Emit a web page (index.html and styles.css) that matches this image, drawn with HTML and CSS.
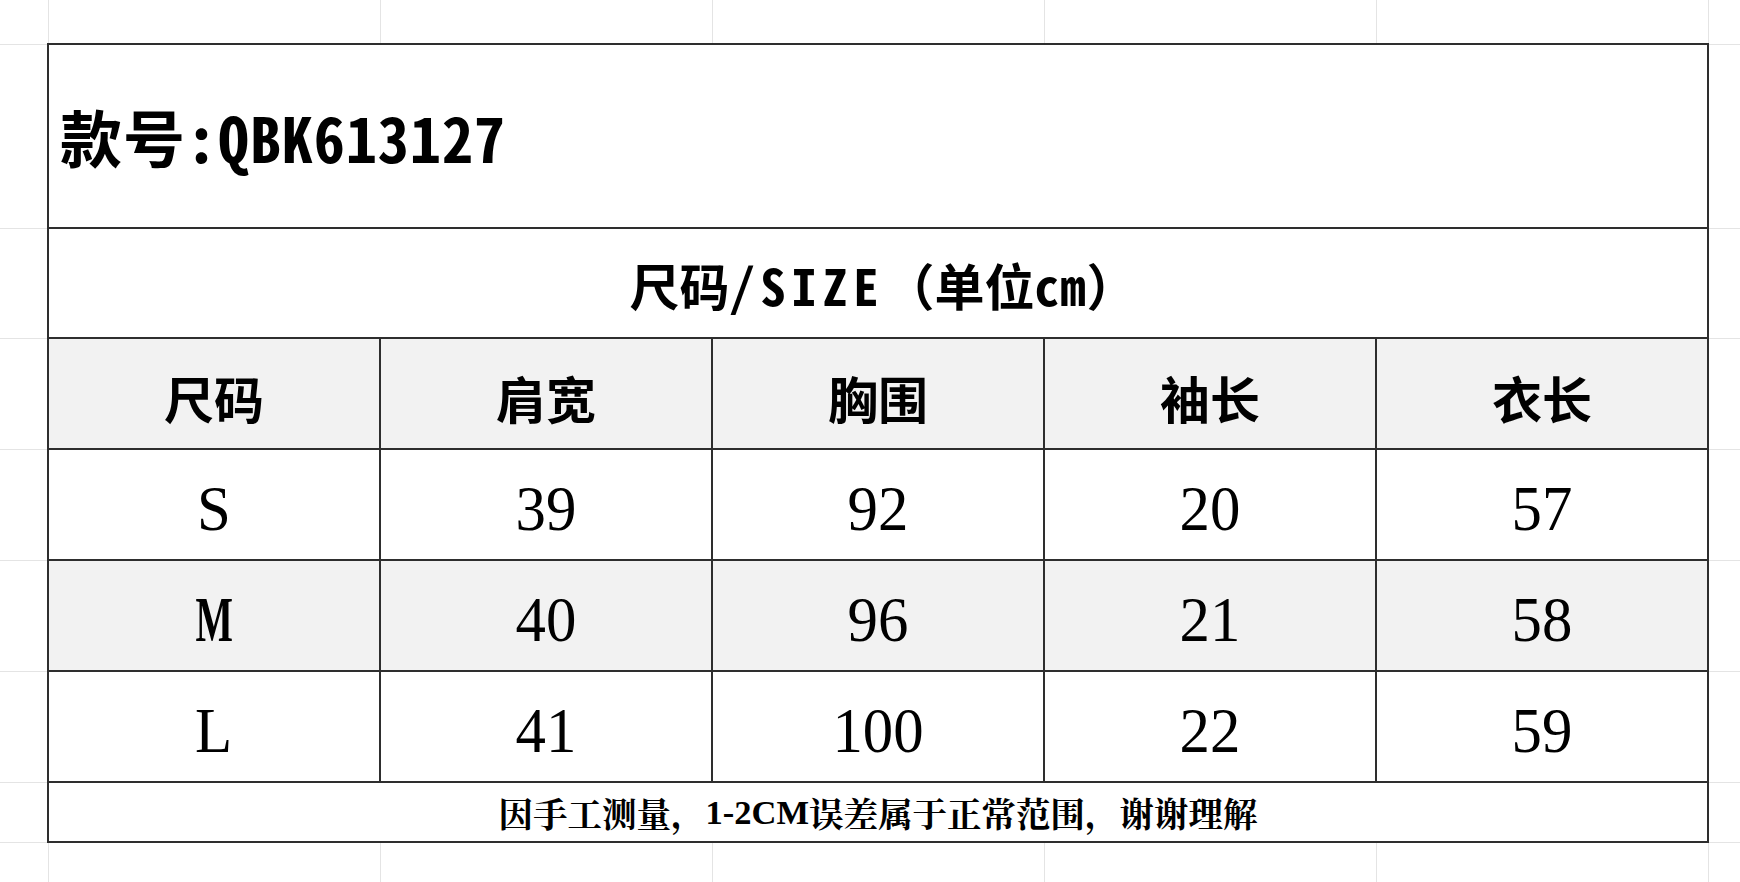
FILE: index.html
```html
<!DOCTYPE html>
<html lang="zh-CN">
<head>
<meta charset="utf-8">
<title>尺码表 QBK613127</title>
<link rel="stylesheet" href="styles.css">
</head>
<body>
<div class="sheet">
  <div class="table">
    <div class="cell title">款号<span class="hw">:QBK613127</span></div>
    <div class="cell caption">尺码<span class="hw size">/SIZE</span>（单位<span class="hw cm">cm</span>）</div>

    <div class="cell head">尺码</div>
    <div class="cell head">肩宽</div>
    <div class="cell head">胸围</div>
    <div class="cell head">袖长</div>
    <div class="cell head">衣长</div>

    <div class="cell num"><span>S</span></div>
    <div class="cell num"><span>39</span></div>
    <div class="cell num"><span>92</span></div>
    <div class="cell num"><span>20</span></div>
    <div class="cell num"><span>57</span></div>

    <div class="cell num shade"><span class="narrow">M</span></div>
    <div class="cell num shade"><span>40</span></div>
    <div class="cell num shade"><span>96</span></div>
    <div class="cell num shade"><span>21</span></div>
    <div class="cell num shade"><span>58</span></div>

    <div class="cell num"><span>L</span></div>
    <div class="cell num"><span>41</span></div>
    <div class="cell num"><span>100</span></div>
    <div class="cell num"><span>22</span></div>
    <div class="cell num"><span>59</span></div>

    <div class="cell note">因手工测量，<span class="latin">1-2CM</span>误差属于正常范围，谢谢理解</div>
  </div>
</div>
</body>
</html>
```

FILE: styles.css
```css
html, body {
  margin: 0;
  padding: 0;
}

body {
  width: 1740px;
  height: 882px;
  overflow: hidden;
  background-color: #ffffff;
  background-image:
    linear-gradient(to right, #e4e4e4 1px, transparent 1px),
    linear-gradient(#e4e4e4, #e4e4e4),
    linear-gradient(#e4e4e4, #e4e4e4),
    linear-gradient(#e4e4e4, #e4e4e4),
    linear-gradient(#e4e4e4, #e4e4e4),
    linear-gradient(#e4e4e4, #e4e4e4),
    linear-gradient(#e4e4e4, #e4e4e4),
    linear-gradient(#e4e4e4, #e4e4e4),
    linear-gradient(#e4e4e4, #e4e4e4);
  background-repeat: repeat-x, no-repeat, no-repeat, no-repeat, no-repeat, no-repeat, no-repeat, no-repeat, no-repeat;
  background-size: 332px 100%, 100% 1px, 100% 1px, 100% 1px, 100% 1px, 100% 1px, 100% 1px, 100% 1px, 100% 1px;
  background-position: 48px 0, 0 44px, 0 228px, 0 338px, 0 449px, 0 560px, 0 671px, 0 782px, 0 842px;
  font-family: "Noto Sans CJK SC", "Noto Sans", sans-serif;
  color: #000;
}

.sheet {
  padding: 43px 0 0 47px;
}

.table {
  display: grid;
  grid-template-columns: 334px repeat(4, 332px);
  grid-template-rows: 186px 110px repeat(4, 111px) 60px;
  width: 1662px;
  box-sizing: border-box;
  background: #ffffff;
}

.cell {
  box-sizing: border-box;
  display: flex;
  align-items: center;
  justify-content: center;
  border-right: 2px solid #2e2e2e;
  border-bottom: 2px solid #2e2e2e;
  background: #ffffff;
}

.table > .cell:nth-child(5n + 3) {
  border-left: 2px solid #2e2e2e;
}

.hw {
  font-feature-settings: "hwid" 1;
}

.title {
  grid-column: 1 / -1;
  justify-content: flex-start;
  border-top: 2px solid #2e2e2e;
  border-left: 2px solid #2e2e2e;
  padding: 0 0 0 11px;
  font-size: 62px;
  font-weight: 700;
  letter-spacing: 1px;
}

.caption {
  grid-column: 1 / -1;
  border-left: 2px solid #2e2e2e;
  padding: 2px 0 0 10px;
  font-size: 50px;
  font-weight: 700;
}

.caption .size {
  letter-spacing: 6px;
}

.caption .cm {
  letter-spacing: 1px;
}

.head {
  background: #f2f2f2;
  font-size: 50px;
  font-weight: 700;
  padding-top: 6px;
}

.num {
  font-family: "Liberation Serif", "Times New Roman", serif;
  font-size: 64px;
  padding-top: 8px;
}

.num span {
  display: inline-block;
  transform: scaleX(0.95);
}

.num span.narrow {
  transform: scaleX(0.62);
  font-weight: 700;
}

.shade {
  background: #f2f2f2;
}

.note {
  grid-column: 1 / -1;
  border-left: 2px solid #2e2e2e;
  font-family: "Noto Serif CJK SC", "Noto Sans CJK SC", serif;
  font-size: 34.5px;
  font-weight: 700;
  padding-top: 0;
}

.note .latin {
  font-family: "Liberation Serif", serif;
  font-weight: 700;
}
```
